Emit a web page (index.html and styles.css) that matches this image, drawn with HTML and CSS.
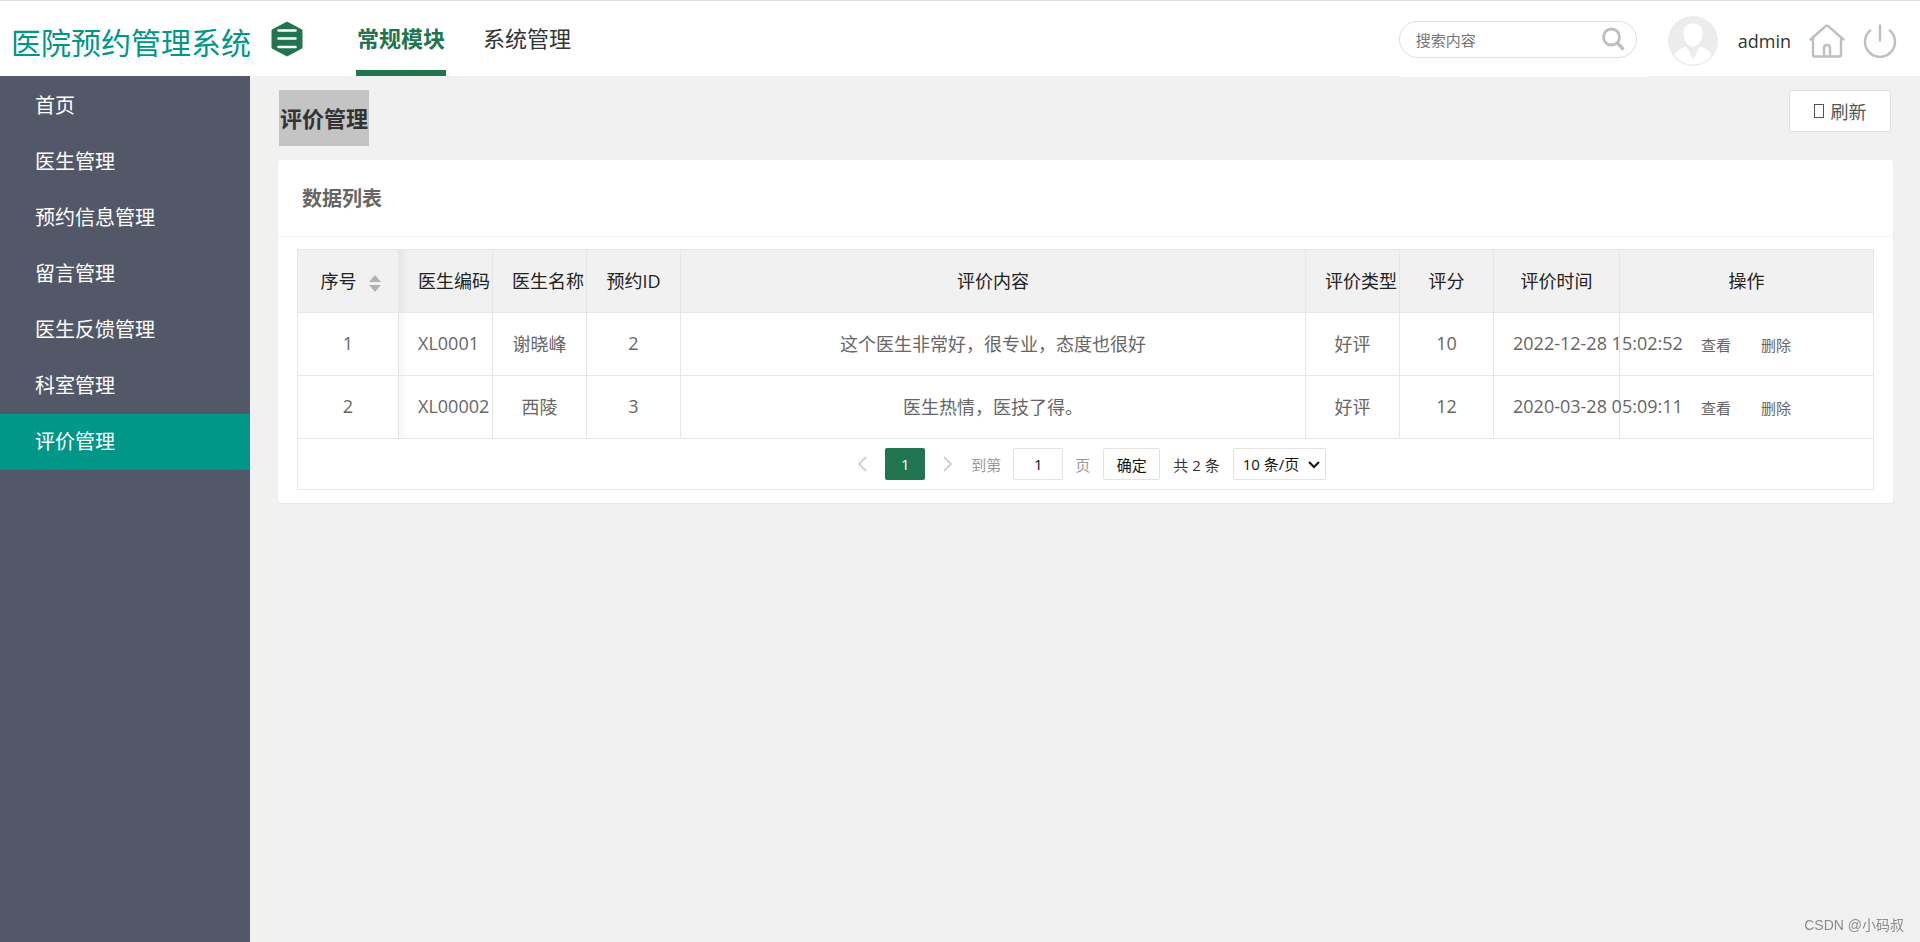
FILE: index.html
```html
<!DOCTYPE html>
<html lang="zh-CN">
<head>
<meta charset="utf-8">
<title>医院预约管理系统</title>
<link rel="stylesheet" href="styles.css">
</head>
<body>
<header class="topbar">
  <a class="brand" href="#">医院预约管理系统</a>
  <button class="menu-toggle" type="button" aria-label="菜单">
    <svg viewBox="0 0 32 36" width="32" height="36"><path d="M16 1 31 9V27L16 35 1 27V9Z" fill="#20744f" stroke="#20744f" stroke-linejoin="round"/><path d="M7.500 9.500h17M7.500 17.500h17M7.500 26h17" stroke="#fff" stroke-width="2.600" stroke-linecap="round"/></svg>
  </button>
  <nav class="modules">
    <a class="module active" href="#">常规模块</a>
    <a class="module" href="#">系统管理</a>
  </nav>
  <form class="search">
    <div class="search-box">
      <input class="search-input" type="text" placeholder="搜索内容" aria-label="搜索内容">
      <button class="search-btn" type="button" aria-label="搜索">
        <svg viewBox="0 0 24 26" width="24" height="26" fill="none" stroke="#bfbfbf"><circle cx="10.500" cy="10" r="8" stroke-width="2.800"/><path d="M16.500 16l5 5.500" stroke-width="3.400" stroke-linecap="round"/></svg>
      </button>
    </div>
  </form>
  <div class="user">
    <svg class="avatar" viewBox="0 0 50 50" width="50" height="50"><circle cx="25" cy="25" r="25" fill="#ececec"/><path d="M25 7.500c6.500 0 9.500 3.500 9.500 9.500 0 7-4 13.500-9.500 13.500S15.500 24 15.500 17c0-6 3-9.500 9.500-9.500Z" fill="#fff"/><path d="M18.500 30.500 23 40l1-4-1.500-2 2.500-1 2.500 1-1.500 2 1 4 4.500-9.500c6 1.500 10 4 12 8.500-4 6-10.500 9.500-18.500 9.500S10.500 45 6.500 39c2-4.500 6-7 12-8.500Z" fill="#fff"/><path d="M22.500 34l2.500-1.500 2.500 1.500-1 2 1 4-2.500 2.500-2.500-2.500 1-4Z" fill="#ececec"/></svg>
    <span class="user-name">admin</span>
    <a class="icon-link" href="#" aria-label="首页">
      <svg viewBox="0 0 36 34" width="36" height="34" fill="none" stroke="#bfbfbf" stroke-width="2.400" stroke-linecap="round" stroke-linejoin="round"><path d="M1.500 15.500 16.500 2.300q1.500-1 3 0L34.500 15.500M4 14v16.500q0 2 2 2h24q2 0 2-2V14M15 32v-8q0-3 3-3t3 3v8"/></svg>
    </a>
    <a class="icon-link" href="#" aria-label="退出">
      <svg viewBox="0 0 34 34" width="34" height="34" fill="none" stroke="#bfbfbf" stroke-width="2.400" stroke-linecap="round"><path d="M17 1.500v15M7.200 6.500a15 15 0 1 0 19.600 0"/></svg>
    </a>
  </div>
</header>
<div class="layout">
  <nav class="sidebar">
    <a class="side-item" href="#">首页</a>
    <a class="side-item" href="#">医生管理</a>
    <a class="side-item" href="#">预约信息管理</a>
    <a class="side-item" href="#">留言管理</a>
    <a class="side-item" href="#">医生反馈管理</a>
    <a class="side-item" href="#">科室管理</a>
    <a class="side-item active" href="#">评价管理</a>
  </nav>
  <main class="content">
    <div class="page-head">
      <h1 class="page-title">评价管理</h1>
      <button class="refresh" type="button"><span class="tofu"></span>刷新</button>
    </div>
    <section class="card">
      <h2 class="card-title">数据列表</h2>
      <div class="card-body">
        <table class="grid">
          <colgroup><col class="c-index"><col class="c-std"><col class="c-std"><col class="c-std"><col><col class="c-std"><col class="c-std"><col class="c-time"><col class="c-ops"></colgroup>
          <thead>
            <tr>
              <th class="sortable">序号<svg class="sort" viewBox="0 0 12 18" width="12" height="18" fill="#b2b2b2"><path d="M6 1l6 7H0ZM6 18l6-7H0Z"/></svg></th>
              <th class="after-fixed left">医生编码</th><th class="left">医生名称</th><th>预约ID</th><th>评价内容</th><th class="left">评价类型</th><th>评分</th><th>评价时间</th><th>操作</th>
            </tr>
          </thead>
          <tbody>
            <tr><td>1</td><td class="after-fixed left">XL0001</td><td>谢晓峰</td><td>2</td><td>这个医生非常好，很专业，态度也很好</td><td>好评</td><td>10</td><td class="left">2022-12-28 15:02:52</td><td class="ops"><a href="#">查看</a><a href="#">删除</a></td></tr>
            <tr><td>2</td><td class="after-fixed left">XL00002</td><td>西陵</td><td>3</td><td>医生热情，医技了得。</td><td>好评</td><td>12</td><td class="left">2020-03-28 05:09:11</td><td class="ops"><a href="#">查看</a><a href="#">删除</a></td></tr>
          </tbody>
        </table>
        <div class="pager">
          <button class="arrow" type="button" aria-label="上一页"><svg viewBox="0 0 10 16" width="10" height="16"><path d="M9 1 2 8l7 7" fill="none" stroke="#d2d2d2" stroke-width="2"/></svg></button>
          <button class="page-num" type="button">1</button>
          <button class="arrow" type="button" aria-label="下一页"><svg viewBox="0 0 10 16" width="10" height="16"><path d="M1 1l7 7-7 7" fill="none" stroke="#d2d2d2" stroke-width="2"/></svg></button>
          <label class="muted" for="page">到第</label>
          <input class="page-input" id="page" type="text" value="1">
          <span class="muted">页</span>
          <button class="confirm" type="button">确定</button>
          <span class="total">共 2 条</span>
          <div class="size-wrap">
            <select class="page-size" aria-label="每页条数"><option>10 条/页</option></select>
            <svg class="chevron" viewBox="0 0 12 8" width="12" height="8"><path d="M1 1l5 5 5-5" fill="none" stroke="#111" stroke-width="2"/></svg>
          </div>
        </div>
      </div>
    </section>
  </main>
</div>
<div class="watermark">CSDN @小码叔</div>
</body>
</html>
```
FILE: styles.css
```css
* { box-sizing: border-box; }
body {
  margin: 0;
  min-height: 100vh;
  display: flex;
  flex-direction: column;
  background: #f1f1f1;
  color: #666;
  font-family: "Open Sans", "Noto Sans CJK SC", sans-serif;
  font-size: 18px;
}
a { color: inherit; text-decoration: none; }
button, input, select { font: inherit; color: inherit; margin: 0; }
button { cursor: pointer; }
svg { display: block; }

.topbar {
  height: 76px;
  display: flex;
  align-items: flex-start;
  background: #fff;
  border-top: 1px solid #dcdcdc;
}
.brand { width: 250px; padding-left: 11px; font-size: 30px; line-height: 84px; color: #009688; white-space: nowrap; }
.menu-toggle { margin: 20px 0 0 21px; padding: 0; border: 0; background: none; }
.modules { display: flex; gap: 36px; margin-left: 53px; }
.module { height: 75px; padding: 0 1px; border-bottom: 6px solid transparent; font-size: 22px; line-height: 74px; color: #333; white-space: nowrap; }
.module.active { color: #20744f; border-color: #20744f; font-weight: bold; }
.search { margin-left: auto; width: 250px; height: 76px; padding-top: 20px; background: #fff; flex: none; }
.search-box { width: 238px; height: 37px; display: flex; align-items: center; border: 1px solid #ddd; border-radius: 19px; padding: 0 11px 0 16px; }
.search-input { flex: 1; min-width: 0; padding: 0; border: 0; outline: 0; background: none; font-size: 15px; }
.search-input::placeholder { color: #757575; }
.search-btn { padding: 0; border: 0; background: none; }
.user { display: flex; align-items: center; height: 80px; margin-left: 19px; padding-right: 23px; }
.user-name { margin: 0 18px 0 20px; color: #333; }
.icon-link + .icon-link { margin-left: 18px; }

.layout { flex: 1; display: flex; }
.sidebar { width: 250px; flex: none; padding-top: 2px; background: #525868; }
.side-item { display: block; padding-left: 35px; font-size: 20px; line-height: 56px; color: #fff; }
.side-item.active { background: #009688; }
.content { flex: 1; min-width: 0; padding: 14px 27px 0 28px; }
.page-head { display: flex; justify-content: space-between; align-items: flex-start; padding: 0 2px 0 1px; }
.page-title { margin: 0; padding: 0 1px; background: #c4c4c4; color: #333; font-size: 22px; line-height: 56px; }
.refresh { display: flex; align-items: center; justify-content: center; gap: 7px; width: 102px; height: 42px; padding: 0; border: 1px solid #ddd; border-radius: 2px; background: #fff; color: #555; }
.tofu { width: 10px; height: 14px; border: 1px solid #555; }
.card { margin-top: 14px; background: #fff; border-radius: 3px; box-shadow: 0 1px 2px rgba(0, 0, 0, .05); }
.card-title { margin: 0; padding: 2px 24px 0; border-bottom: 1px solid #f6f6f6; font-size: 20px; line-height: 74px; }
.card-body { padding: 12px 19px 13px; }

.grid { width: 100%; table-layout: fixed; border-collapse: collapse; }
.c-index { width: 101px; }
.c-std { width: 94px; }
.c-time { width: 126px; }
.c-ops { width: 254px; }
.grid th, .grid td { height: 63px; padding: 0 0 2px; border: 1px solid #e6e6e6; font-weight: normal; text-align: center; white-space: nowrap; }
.grid th { background: #f1f1f1; color: #222; }
.grid .sortable { padding-left: 5px; }
.grid .left { padding-left: 19px; text-align: left; }
.grid .after-fixed { background-image: linear-gradient(to right, rgba(0, 0, 0, .04), transparent 9px); background-repeat: no-repeat; background-clip: padding-box; }
.sort { display: inline-block; margin-left: 12px; vertical-align: middle; }
.grid .ops { padding-left: 81px; padding-top: 2px; text-align: left; font-size: 15px; }
.ops a + a { margin-left: 30px; }

.pager { display: flex; align-items: center; justify-content: center; height: 51px; padding-right: 6px; border: 1px solid #e6e6e6; border-top: 0; font-size: 15px; color: #333; }
.arrow { padding: 0 18px; border: 0; background: none; }
.page-num { width: 40px; height: 32px; padding: 0; border: 0; border-radius: 2px; background: #20744f; color: #fff; }
.muted { color: #999; }
.page-input { width: 50px; height: 32px; margin: 0 12px; padding: 0; border: 1px solid #e2e2e2; border-radius: 2px; text-align: center; color: #111; }
.confirm { width: 57px; height: 32px; margin: 0 13px; padding: 0; border: 1px solid #e2e2e2; border-radius: 2px; background: #fff; color: #111; }
.size-wrap { position: relative; margin-left: 13px; }
.page-size { display: block; appearance: none; width: 93px; height: 32px; padding: 0 0 0 9px; border: 1px solid #e2e2e2; border-radius: 2px; background: #fff; color: #111; }
.chevron { position: absolute; right: 6px; top: 13px; pointer-events: none; }

.watermark { position: fixed; right: 16px; bottom: 8px; font-family: "Liberation Sans", "Noto Sans CJK SC", sans-serif; font-size: 14px; color: #8c8c8c; }
```
